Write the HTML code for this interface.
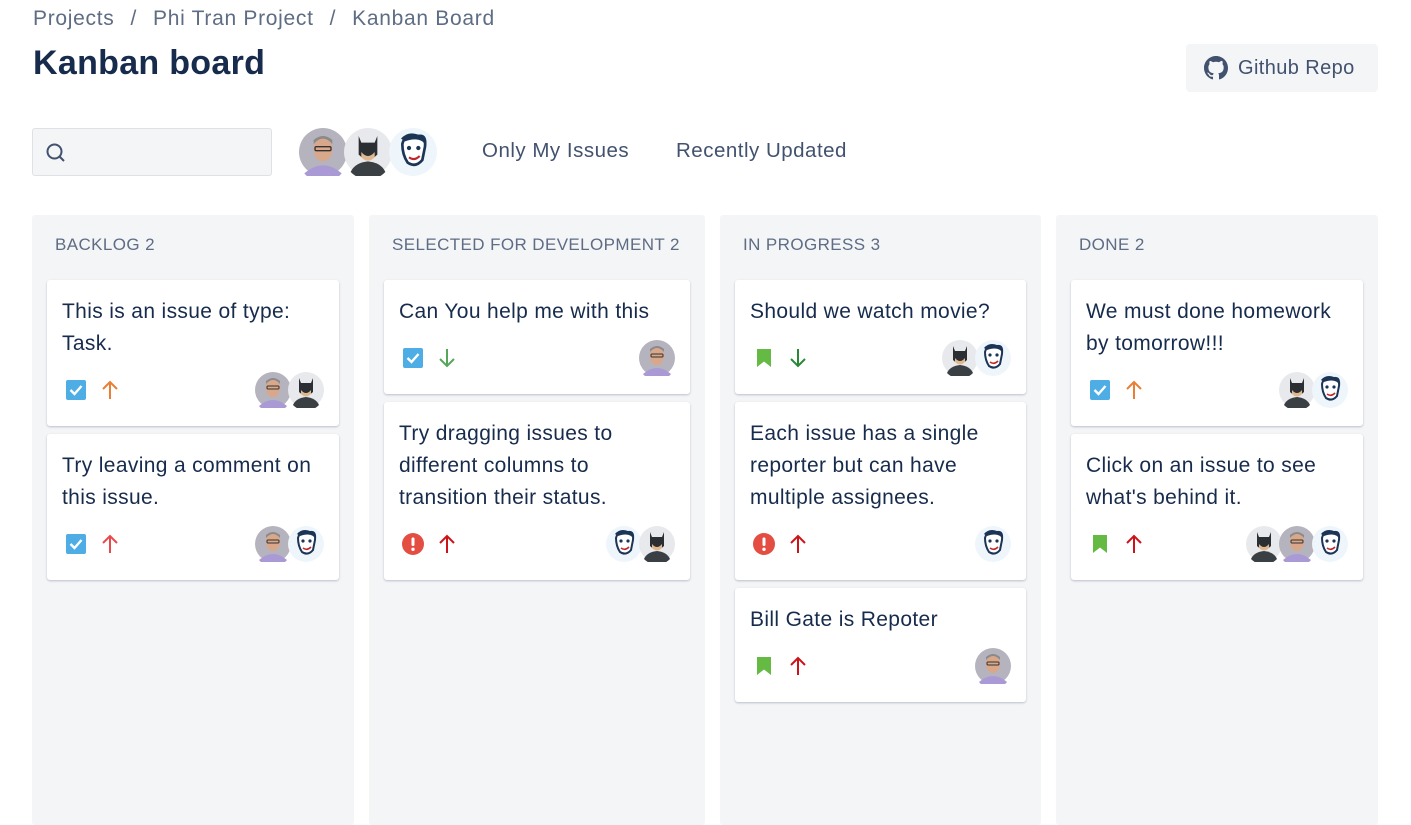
<!DOCTYPE html>
<html><head><meta charset="utf-8"><style>
*{box-sizing:border-box;margin:0;padding:0}
body{width:1411px;height:814px;overflow:hidden;background:#fff;font-family:"Liberation Sans",sans-serif;color:#172b4d;position:relative}
.abs{position:absolute}
.bc{left:33px;top:7px;font-size:21px;color:#5e6c84;white-space:nowrap;letter-spacing:0.7px}
.bc span{margin:0 16px}
h1{position:absolute;left:33px;top:44px;font-size:34px;font-weight:bold;color:#172b4d;letter-spacing:0.3px}
.gh{left:1186px;top:44px;width:192px;height:48px;background:#f4f5f7;border-radius:4px;font-size:20px;color:#42526e;display:flex;align-items:center;padding-left:18px;gap:10px;letter-spacing:0.4px}
.search{left:32px;top:128px;width:240px;height:48px;background:#f4f5f7;border:1px solid #dfe1e6;border-radius:3px}
.flt{top:139px;font-size:20.5px;color:#42526e;letter-spacing:0.5px}
.col{top:215px;height:610px;background:#f4f5f7;border-radius:3px;padding:0 15px}
.ch{font-size:17px;color:#5e6c84;padding:20px 8px 0;height:65px;white-space:nowrap;letter-spacing:0.4px}
.card{background:#fff;border-radius:3px;box-shadow:0 1px 2px rgba(9,30,66,.25);padding:16px 15px 18px;margin-bottom:8px}
.t{font-size:21px;line-height:32px;color:#172b4d;letter-spacing:0.35px;white-space:nowrap}
.f{margin-top:12px;height:36px;display:flex;align-items:center;justify-content:space-between}
.ic{display:flex;align-items:center;gap:12px;padding-left:3px}
.av{display:flex}
.av svg{margin-left:-3px}
</style></head><body>
<svg width="0" height="0" style="position:absolute"><defs>
<g id="bill"><circle cx="18" cy="18" r="18" fill="#b5b3bd"/><path d="M4 34 Q18 22 32 34 A18 18 0 0 1 4 34Z" fill="#a99ad6"/><ellipse cx="18" cy="16" rx="7" ry="9" fill="#d9a88a"/><path d="M11 12 Q18 4 25 12 L25 9 Q18 3 11 9Z" fill="#8a8a8a"/><rect x="12" y="14" width="12" height="3" rx="1" fill="none" stroke="#333" stroke-width="1"/></g>
<g id="bat"><circle cx="18" cy="18" r="18" fill="#e8e9ec"/><path d="M5 33 Q8 26 18 25 Q28 26 31 33 A18 18 0 0 1 5 33Z" fill="#3a3f44"/><path d="M11 6 L13 11 L23 11 L25 6 L25 20 Q18 27 11 20Z" fill="#2b2f33"/><path d="M13 18 Q18 24 23 18 L23 22 Q18 27 13 22Z" fill="#e0b890"/></g>
<g id="jok"><circle cx="18" cy="18" r="18" fill="#eef6fb"/><path d="M10 12 Q12 4 20 6 Q28 6 27 14 L25 24 Q20 30 14 26 Q10 20 10 12Z" fill="#fff" stroke="#1c3557" stroke-width="2"/><path d="M9 8 Q14 2 22 5 Q29 4 28 13 L25 10 Q20 7 12 10Z" fill="#1c3557"/><circle cx="15" cy="15" r="1.6" fill="#1c3557"/><circle cx="22" cy="15" r="1.6" fill="#1c3557"/><path d="M15 22 Q19 25 23 21" stroke="#c0272d" stroke-width="1.6" fill="none"/></g>
<g id="task"><rect x="1" y="1" width="20" height="20" rx="2" fill="#4fade6"/><path d="M5.5 11 L9.5 15 L16.5 7" stroke="#fff" stroke-width="2.4" fill="none"/></g>
<g id="story"><path d="M4 2 H18 V20 L11 14.5 L4 20Z" fill="#65ba43"/></g>
<g id="bug"><circle cx="11" cy="11" r="11" fill="#e44d42"/><rect x="9.5" y="4.5" width="3" height="8.5" rx="1.2" fill="#fff"/><circle cx="11" cy="16.3" r="1.7" fill="#fff"/></g>
</defs></svg>
<div class="abs bc">Projects<span>/</span>Phi Tran Project<span>/</span>Kanban Board</div>
<h1>Kanban board</h1>
<div class="abs gh"><svg width="24" height="24" viewBox="0 0 16 16"><path fill="#42526e" d="M8 0C3.58 0 0 3.58 0 8c0 3.54 2.29 6.53 5.47 7.59.4.07.55-.17.55-.38 0-.19-.01-.82-.01-1.49-2.01.37-2.53-.49-2.69-.94-.09-.23-.48-.94-.82-1.13-.28-.15-.68-.52-.01-.53.63-.01 1.08.58 1.23.82.72 1.21 1.87.87 2.33.66.07-.52.28-.87.51-1.07-1.78-.2-3.64-.89-3.64-3.95 0-.87.31-1.59.82-2.15-.08-.2-.36-1.02.08-2.12 0 0 .67-.21 2.2.82.64-.18 1.32-.27 2-.27.68 0 1.36.09 2 .27 1.53-1.04 2.2-.82 2.2-.82.44 1.1.16 1.92.08 2.12.51.56.82 1.27.82 2.15 0 3.07-1.87 3.75-3.65 3.95.29.25.54.73.54 1.48 0 1.07-.01 1.93-.01 2.2 0 .21.15.46.55.38A8.013 8.013 0 0 0 16 8c0-4.42-3.58-8-8-8z"/></svg>Github Repo</div>
<div class="abs search"><svg class="abs" style="left:12px;top:13px" width="22" height="22" viewBox="0 0 22 22"><circle cx="9.5" cy="9.5" r="7" fill="none" stroke="#42526e" stroke-width="2"/><path d="M14.5 14.5 L19 19" stroke="#42526e" stroke-width="2"/></svg></div>
<div class="abs" style="left:299px;top:128px;display:flex">
<svg width="48" height="48" viewBox="0 0 36 36"><use href="#bill"/></svg><svg width="48" height="48" viewBox="0 0 36 36" style="margin-left:-3px"><use href="#bat"/></svg><svg width="48" height="48" viewBox="0 0 36 36" style="margin-left:-3px"><use href="#jok"/></svg></div>
<div class="abs flt" style="left:482px">Only My Issues</div>
<div class="abs flt" style="left:676px">Recently Updated</div>

<div class="abs col" style="left:32px;width:322px"><div class="ch">BACKLOG 2</div>
<div class="card"><div class="t">This is an issue of type:<br>Task.</div><div class="f"><div class="ic"><svg width="22" height="22"><use href="#task"/></svg><svg width="22" height="22" viewBox="0 0 22 22"><path d="M11 20V3M4 10l7-7 7 7" stroke="#e97f33" stroke-width="2" fill="none"/></svg></div><div class="av"><svg width="36" height="36"><use href="#bill"/></svg><svg width="36" height="36"><use href="#bat"/></svg></div></div></div>
<div class="card"><div class="t">Try leaving a comment on<br>this issue.</div><div class="f"><div class="ic"><svg width="22" height="22"><use href="#task"/></svg><svg width="22" height="22" viewBox="0 0 22 22"><path d="M11 20V3M4 10l7-7 7 7" stroke="#e9494a" stroke-width="2" fill="none"/></svg></div><div class="av"><svg width="36" height="36"><use href="#bill"/></svg><svg width="36" height="36"><use href="#jok"/></svg></div></div></div>
</div>

<div class="abs col" style="left:369px;width:336px"><div class="ch">SELECTED FOR DEVELOPMENT 2</div>
<div class="card"><div class="t">Can You help me with this</div><div class="f"><div class="ic"><svg width="22" height="22"><use href="#task"/></svg><svg width="22" height="22" viewBox="0 0 22 22"><path d="M11 2V19M4 12l7 7 7-7" stroke="#57a55a" stroke-width="2" fill="none"/></svg></div><div class="av"><svg width="36" height="36"><use href="#bill"/></svg></div></div></div>
<div class="card"><div class="t">Try dragging issues to<br>different columns to<br>transition their status.</div><div class="f"><div class="ic"><svg width="22" height="22"><use href="#bug"/></svg><svg width="22" height="22" viewBox="0 0 22 22"><path d="M11 20V3M4 10l7-7 7 7" stroke="#cd1317" stroke-width="2" fill="none"/></svg></div><div class="av"><svg width="36" height="36"><use href="#jok"/></svg><svg width="36" height="36"><use href="#bat"/></svg></div></div></div>
</div>

<div class="abs col" style="left:720px;width:321px"><div class="ch">IN PROGRESS 3</div>
<div class="card"><div class="t">Should we watch movie?</div><div class="f"><div class="ic"><svg width="22" height="22"><use href="#story"/></svg><svg width="22" height="22" viewBox="0 0 22 22"><path d="M11 2V19M4 12l7 7 7-7" stroke="#2a8735" stroke-width="2" fill="none"/></svg></div><div class="av"><svg width="36" height="36"><use href="#bat"/></svg><svg width="36" height="36"><use href="#jok"/></svg></div></div></div>
<div class="card"><div class="t">Each issue has a single<br>reporter but can have<br>multiple assignees.</div><div class="f"><div class="ic"><svg width="22" height="22"><use href="#bug"/></svg><svg width="22" height="22" viewBox="0 0 22 22"><path d="M11 20V3M4 10l7-7 7 7" stroke="#cd1317" stroke-width="2" fill="none"/></svg></div><div class="av"><svg width="36" height="36"><use href="#jok"/></svg></div></div></div>
<div class="card"><div class="t">Bill Gate is Repoter</div><div class="f"><div class="ic"><svg width="22" height="22"><use href="#story"/></svg><svg width="22" height="22" viewBox="0 0 22 22"><path d="M11 20V3M4 10l7-7 7 7" stroke="#cd1317" stroke-width="2" fill="none"/></svg></div><div class="av"><svg width="36" height="36"><use href="#bill"/></svg></div></div></div>
</div>

<div class="abs col" style="left:1056px;width:322px"><div class="ch">DONE 2</div>
<div class="card"><div class="t">We must done homework<br>by tomorrow!!!</div><div class="f"><div class="ic"><svg width="22" height="22"><use href="#task"/></svg><svg width="22" height="22" viewBox="0 0 22 22"><path d="M11 20V3M4 10l7-7 7 7" stroke="#e97f33" stroke-width="2" fill="none"/></svg></div><div class="av"><svg width="36" height="36"><use href="#bat"/></svg><svg width="36" height="36"><use href="#jok"/></svg></div></div></div>
<div class="card"><div class="t">Click on an issue to see<br>what's behind it.</div><div class="f"><div class="ic"><svg width="22" height="22"><use href="#story"/></svg><svg width="22" height="22" viewBox="0 0 22 22"><path d="M11 20V3M4 10l7-7 7 7" stroke="#cd1317" stroke-width="2" fill="none"/></svg></div><div class="av"><svg width="36" height="36"><use href="#bat"/></svg><svg width="36" height="36"><use href="#bill"/></svg><svg width="36" height="36"><use href="#jok"/></svg></div></div></div>
</div>
</body></html>
